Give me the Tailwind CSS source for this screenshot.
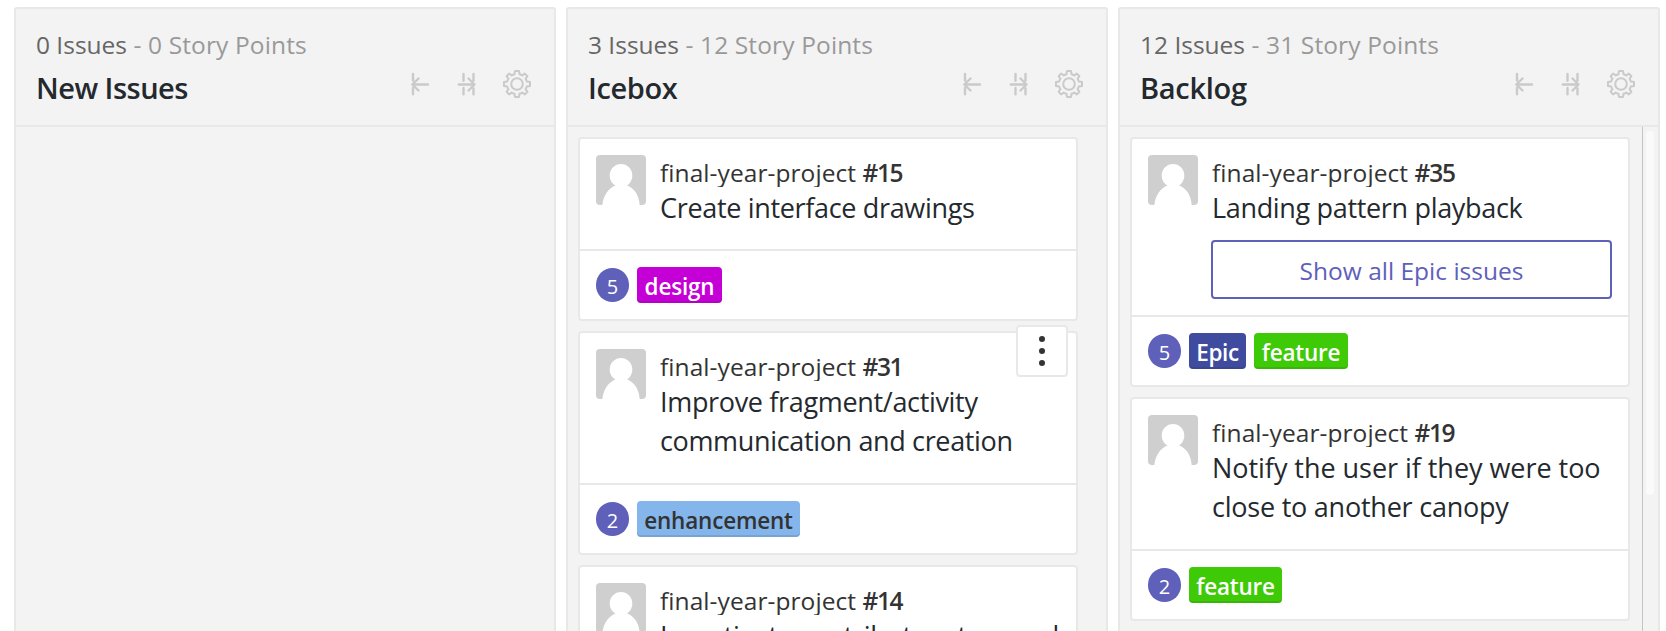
<!DOCTYPE html>
<html lang="en">
<head>
<meta charset="utf-8">
<title>Board</title>
<script src="https://cdn.jsdelivr.net/npm/@tailwindcss/browser@4"></script>
</head>
<body class="h-[631px] overflow-hidden bg-white font-['Open_Sans','Noto_Sans',sans-serif] text-[#24292e]">
<svg class="hidden">
  <symbol id="left" viewBox="0 0 20 24"><path d="M4 2V8.500M4 16V22.200M19.300 12.500H3.500M9.500 6.500L3.300 12.500L9.500 18.500" fill="none" stroke="currentColor" stroke-width="2.4" stroke-linecap="round" stroke-linejoin="round"/></symbol>
  <symbol id="right" viewBox="0 0 20 24"><path d="M6.500 2V8.700M6.500 16V22.200M16.500 2V8.500M16.500 16.500V22.200M1.800 12.500H17M11.500 6.500L17.500 12.500L11.500 18.500" fill="none" stroke="currentColor" stroke-width="2.4" stroke-linecap="round" stroke-linejoin="round"/></symbol>
  <symbol id="gear" viewBox="0 0 30 30"><g fill="none" stroke="currentColor" stroke-width="2" stroke-linejoin="round"><circle cx="15" cy="15" r="5.8"/><path d="M13 2H17L17.6 5.2Q19 5.6 20.3 6.4L22.9 4.6L25.4 7.1L23.6 9.7Q24.4 11 24.8 12.4L28 13V17L24.8 17.6Q24.4 19 23.6 20.3L25.4 22.9L22.9 25.4L20.3 23.6Q19 24.4 17.6 24.8L17 28H13L12.4 24.8Q11 24.4 9.7 23.6L7.1 25.4L4.6 22.9L6.4 20.3Q5.6 19 5.2 17.6L2 17V13L5.2 12.4Q5.6 11 6.4 9.7L4.6 7.1L7.1 4.6L9.7 6.4Q11 5.6 12.4 5.2Z"/></g></symbol>
  <symbol id="avatar" viewBox="0 0 50 50"><rect width="50" height="50" fill="#cfcfcf"/><path d="M6.3 50C7.5 40 13 33 19.5 30.6C16 28.500 13.700 25 13.700 20.500A11.300 11.500 0 0 1 36.300 20.500C36.300 25 34 28.500 31 30.600C38 33 43 40 43.700 50Z" fill="#fff"/></symbol>
</svg>
<main class="flex h-[640px] gap-2.5 pt-[7px] pl-3.5">

  <section class="flex w-[542px] shrink-0 flex-col rounded-t-[3px] border-2 border-[#e8e8e8] bg-[#f3f3f3]">
    <header class="h-[118px] shrink-0 border-b-2 border-[#e8e8e8] pt-[17px] pr-[22px] pl-5">
      <p class="text-[24.5px] leading-[37px] whitespace-pre text-[#999]"><span class="text-[#666]">0 Issues</span><span class="tracking-[0.13px]"> - 0 Story Points</span></p>
      <div class="flex justify-between">
        <h2 class="text-[29px] leading-[49px] font-semibold tracking-[-0.5px]">New Issues</h2>
        <div class="flex h-[42px] items-center text-[#cacaca]"><svg class="mr-7 h-6 w-5"><use href="#left"/></svg><svg class="mr-[25px] h-6 w-5"><use href="#right"/></svg><svg class="size-[30px]"><use href="#gear"/></svg></div>
      </div>
    </header>
  </section>

  <section class="flex w-[542px] shrink-0 flex-col rounded-t-[3px] border-2 border-[#e8e8e8] bg-[#f3f3f3]">
    <header class="h-[118px] shrink-0 border-b-2 border-[#e8e8e8] pt-[17px] pr-[22px] pl-5">
      <p class="text-[24.5px] leading-[37px] whitespace-pre text-[#999]"><span class="text-[#666]">3 Issues</span><span class="tracking-[0.13px]"> - 12 Story Points</span></p>
      <div class="flex justify-between">
        <h2 class="text-[29px] leading-[49px] font-semibold tracking-[-0.4px]">Icebox</h2>
        <div class="flex h-[42px] items-center text-[#cacaca]"><svg class="mr-7 h-6 w-5"><use href="#left"/></svg><svg class="mr-[25px] h-6 w-5"><use href="#right"/></svg><svg class="size-[30px]"><use href="#gear"/></svg></div>
      </div>
    </header>
    <div class="flex min-h-0 flex-1 flex-col gap-2.5 overflow-hidden pt-2.5 pl-2.5">
      <article class="w-[500px] shrink-0 rounded border-2 border-[#e8e8e8] bg-white">
        <div class="flex h-[112px] gap-3.5 border-b-2 border-[#e8e8e8] px-4 pt-4">
          <svg class="size-[50px] shrink-0 rounded"><use href="#avatar"/></svg>
          <div class="pt-[3px]">
            <p class="mb-px h-[29px] overflow-hidden text-[24.5px] leading-[29px] tracking-[0.07px] whitespace-nowrap text-[#333]">final-year-project <b class="font-semibold tracking-[-1.4px]">#15</b></p>
            <h3 class="text-[27px] leading-[39px] whitespace-nowrap"><span class="tracking-[-0.33px]">Create interface drawings</span></h3>
          </div>
        </div>
        <div class="flex h-[68px] items-center gap-2 px-4">
          <span class="flex h-[34px] w-[33px] items-center justify-center rounded-full bg-[#5e60ba] pt-1 text-xl text-white">5</span>
          <span class="h-9 w-[85px] rounded bg-[#c500d6] text-center text-[22.5px] leading-[39px] font-semibold tracking-[-0.2px] text-white shadow-[inset_0_-2px_0_rgba(27,31,35,0.12)]">design</span>
        </div>
      </article>
      <article class="relative w-[500px] shrink-0 rounded border-2 border-[#e8e8e8] bg-white">
        <div class="flex h-[152px] gap-3.5 border-b-2 border-[#e8e8e8] px-4 pt-4">
          <svg class="size-[50px] shrink-0 rounded"><use href="#avatar"/></svg>
          <div class="pt-[3px]">
            <p class="mb-px h-[29px] overflow-hidden text-[24.5px] leading-[29px] tracking-[0.07px] whitespace-nowrap text-[#333]">final-year-project <b class="font-semibold tracking-[-1.4px]">#31</b></p>
            <h3 class="text-[27px] leading-[39px] whitespace-nowrap"><span class="tracking-[-0.33px]">Improve fragment/activity</span><br><span class="tracking-[-0.35px]">communication and creation</span></h3>
          </div>
        </div>
        <div class="flex h-[68px] items-center gap-2 px-4">
          <span class="flex h-[34px] w-[33px] items-center justify-center rounded-full bg-[#5e60ba] pt-1 text-xl text-white">2</span>
          <span class="h-9 w-[163px] rounded bg-[#84b6eb] text-center text-[22.5px] leading-[39px] font-semibold tracking-[-0.2px] text-[#333] shadow-[inset_0_-2px_0_rgba(27,31,35,0.12)]">enhancement</span>
        </div>
        <button class="absolute -top-2 right-2 flex size-[52px] items-center justify-center rounded border-2 border-[#e8e8e8] bg-white"><svg class="h-[30px] w-1.5 text-[#333]" viewBox="0 0 6 30" fill="currentColor"><circle cx="3" cy="3" r="3"/><circle cx="3" cy="15" r="3"/><circle cx="3" cy="27" r="3"/></svg></button>
      </article>
      <article class="w-[500px] shrink-0 rounded border-2 border-[#e8e8e8] bg-white">
        <div class="flex h-[152px] gap-3.5 border-b-2 border-[#e8e8e8] px-4 pt-4">
          <svg class="size-[50px] shrink-0 rounded"><use href="#avatar"/></svg>
          <div class="pt-[3px]">
            <p class="mb-px h-[29px] overflow-hidden text-[24.5px] leading-[29px] tracking-[0.07px] whitespace-nowrap text-[#333]">final-year-project <b class="font-semibold tracking-[-1.4px]">#14</b></p>
            <h3 class="text-[27px] leading-[39px] whitespace-nowrap"><span class="tracking-[-0.36px]">Investigate contributors to <span class="tracking-[-1.6px]">speed</span></span></h3>
          </div>
        </div>
      </article>
    </div>
  </section>

  <section class="flex w-[542px] shrink-0 flex-col rounded-t-[3px] border-2 border-[#e8e8e8] bg-[#f3f3f3]">
    <header class="h-[118px] shrink-0 border-b-2 border-[#e8e8e8] pt-[17px] pr-[22px] pl-5">
      <p class="text-[24.5px] leading-[37px] whitespace-pre text-[#999]"><span class="text-[#666]">12 Issues</span><span class="tracking-[0.13px]"> - 31 Story Points</span></p>
      <div class="flex justify-between">
        <h2 class="text-[29px] leading-[49px] font-semibold tracking-[-0.3px]">Backlog</h2>
        <div class="flex h-[42px] items-center text-[#cacaca]"><svg class="mr-7 h-6 w-5"><use href="#left"/></svg><svg class="mr-[25px] h-6 w-5"><use href="#right"/></svg><svg class="size-[30px]"><use href="#gear"/></svg></div>
      </div>
    </header>
    <div class="flex min-h-0 flex-1 justify-between overflow-hidden">
      <div class="flex flex-col gap-2.5 pt-2.5 pl-2.5">
        <article class="w-[500px] shrink-0 rounded border-2 border-[#e8e8e8] bg-white">
          <div class="flex h-[178px] gap-3.5 border-b-2 border-[#e8e8e8] px-4 pt-4">
            <svg class="size-[50px] shrink-0 rounded"><use href="#avatar"/></svg>
            <div class="flex-1 pt-[3px]">
              <p class="mb-px h-[29px] overflow-hidden text-[24.5px] leading-[29px] tracking-[0.07px] whitespace-nowrap text-[#333]">final-year-project <b class="font-semibold tracking-[-1.2px]">#35</b></p>
              <h3 class="text-[27px] leading-[39px] whitespace-nowrap"><span class="tracking-[-0.33px]">Landing pattern playback</span></h3>
              <button class="mt-[13px] -ml-px block h-[59px] w-[401px] rounded border-2 border-[#5e60ba] pt-0.5 text-[24.5px] leading-[53px] text-[#5e60ba]">Show all Epic issues</button>
            </div>
          </div>
          <div class="flex h-[68px] items-center gap-2 px-4">
            <span class="flex h-[34px] w-[33px] items-center justify-center rounded-full bg-[#5e60ba] pt-1 text-xl text-white">5</span>
            <span class="h-9 w-[57px] rounded bg-[#3f4b9e] text-center text-[22.5px] leading-[39px] font-semibold tracking-[-0.4px] text-white shadow-[inset_0_-2px_0_rgba(27,31,35,0.12)]">Epic</span>
            <span class="h-9 w-[94px] rounded bg-[#3fca07] text-center text-[22.5px] leading-[39px] font-semibold tracking-[-0.2px] text-white shadow-[inset_0_-2px_0_rgba(27,31,35,0.12)]">feature</span>
          </div>
        </article>
        <article class="w-[500px] shrink-0 rounded border-2 border-[#e8e8e8] bg-white">
          <div class="flex h-[152px] gap-3.5 border-b-2 border-[#e8e8e8] px-4 pt-4">
            <svg class="size-[50px] shrink-0 rounded"><use href="#avatar"/></svg>
            <div class="pt-[3px]">
              <p class="mb-px h-[29px] overflow-hidden text-[24.5px] leading-[29px] tracking-[0.07px] whitespace-nowrap text-[#333]">final-year-project <b class="font-semibold tracking-[-1.4px]">#19</b></p>
              <h3 class="text-[27px] leading-[39px] whitespace-nowrap"><span class="tracking-[-0.04px]">Notify the user if they were too</span><br><span class="tracking-[-0.23px]">close to another canopy</span></h3>
            </div>
          </div>
          <div class="flex h-[68px] items-center gap-2 px-4">
            <span class="flex h-[34px] w-[33px] items-center justify-center rounded-full bg-[#5e60ba] pt-1 text-xl text-white">2</span>
            <span class="h-9 w-[93px] rounded bg-[#3fca07] text-center text-[22.5px] leading-[39px] font-semibold tracking-[-0.2px] text-white shadow-[inset_0_-2px_0_rgba(27,31,35,0.12)]">feature</span>
          </div>
        </article>
      </div>
      <div class="w-4 border-l border-[#c4c4c4] bg-[#f3f3f3] pt-1 pl-[3px]"><div class="h-[364px] w-2 rounded-full bg-[#fafafa]"></div></div>
    </div>
  </section>
</main>
</body>
</html>
